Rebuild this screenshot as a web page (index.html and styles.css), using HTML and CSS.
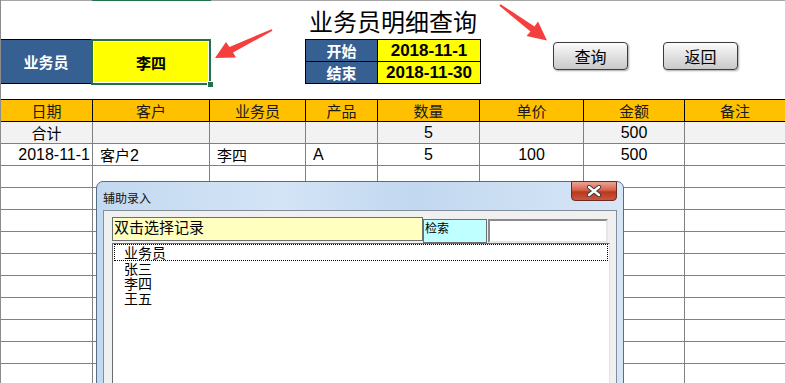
FILE: index.html
```html
<!DOCTYPE html>
<html lang="zh-CN">
<head>
<meta charset="utf-8">
<title>业务员明细查询</title>
<link rel="stylesheet" href="styles.css">
</head>
<body>
<div class="sheet">
  <div class="strip"><span class="s-gray s-first"></span><span class="s-sel"></span><span class="s-gray s-rest"></span></div>
  <div class="top">
    <div class="who">
      <div class="who-label">业务员</div>
      <div class="who-value">李四<span class="handle"></span></div>
    </div>
    <div class="center">
      <h1 class="title">业务员明细查询</h1>
      <div class="dates">
        <div class="d-label">开始</div>
        <div class="d-val">2018-11-1</div>
        <div class="d-label d-second">结束</div>
        <div class="d-val d-second">2018-11-30</div>
      </div>
    </div>
    <div class="btns">
      <div class="btn">查询</div>
      <div class="btn">返回</div>
    </div>
  </div>

  <div class="grid">
    <div class="c h">日期</div><div class="c h">客户</div><div class="c h">业务员</div><div class="c h">产品</div><div class="c h">数量</div><div class="c h">单价</div><div class="c h">金额</div><div class="c h">备注</div>

    <div class="c sum ctr">合计</div><div class="c sum"></div><div class="c sum"></div><div class="c sum"></div><div class="c sum ctr num">5</div><div class="c sum"></div><div class="c sum ctr num">500</div><div class="c sum"></div>

    <div class="c r num">2018-11-1</div><div class="c l">客户<span class="num">2</span></div><div class="c l">李四</div><div class="c l num">A</div><div class="c ctr num">5</div><div class="c ctr num">100</div><div class="c ctr num">500</div><div class="c"></div>

    <div class="c"></div><div class="c"></div><div class="c"></div><div class="c"></div><div class="c"></div><div class="c"></div><div class="c"></div><div class="c"></div>
    <div class="c"></div><div class="c"></div><div class="c"></div><div class="c"></div><div class="c"></div><div class="c"></div><div class="c"></div><div class="c"></div>
    <div class="c"></div><div class="c"></div><div class="c"></div><div class="c"></div><div class="c"></div><div class="c"></div><div class="c"></div><div class="c"></div>
    <div class="c"></div><div class="c"></div><div class="c"></div><div class="c"></div><div class="c"></div><div class="c"></div><div class="c"></div><div class="c"></div>
    <div class="c"></div><div class="c"></div><div class="c"></div><div class="c"></div><div class="c"></div><div class="c"></div><div class="c"></div><div class="c"></div>
    <div class="c"></div><div class="c"></div><div class="c"></div><div class="c"></div><div class="c"></div><div class="c"></div><div class="c"></div><div class="c"></div>
    <div class="c"></div><div class="c"></div><div class="c"></div><div class="c"></div><div class="c"></div><div class="c"></div><div class="c"></div><div class="c"></div>
    <div class="c"></div><div class="c"></div><div class="c"></div><div class="c"></div><div class="c"></div><div class="c"></div><div class="c"></div><div class="c"></div>
    <div class="c"></div><div class="c"></div><div class="c"></div><div class="c"></div><div class="c"></div><div class="c"></div><div class="c"></div><div class="c"></div>
    <div class="c"></div><div class="c"></div><div class="c"></div><div class="c"></div><div class="c"></div><div class="c"></div><div class="c"></div><div class="c"></div>
  </div>

  <svg class="arrows" width="785" height="100" viewBox="0 0 785 100">
    <polygon points="215,58 236,57.5 233,52.5 272.5,30.8 271.5,29.2 229.5,47 226,42" fill="#f53e3e"/>
    <polygon points="547,40.5 526.5,36 530.5,31.5 499.4,5.8 500.6,4.2 534.5,26.5 538,21.5" fill="#f53e3e"/>
  </svg>

  <div class="dialog">
    <div class="dlg-title">辅助录入</div>
    <div class="close">
      <svg width="16" height="12" viewBox="0 0 16 12">
        <path d="M3 2 L13 10 M13 2 L3 10" stroke="#3a3a3a" stroke-width="4.2" stroke-linecap="round"/>
        <path d="M3 2 L13 10 M13 2 L3 10" stroke="#ffffff" stroke-width="2.4" stroke-linecap="round"/>
      </svg>
    </div>
    <div class="dlg-body">
      <div class="search-row">
        <div class="hint">双击选择记录</div>
        <div class="kw">检索</div>
        <div class="input"></div>
      </div>
      <div class="list">
        <div class="item focus">业务员</div>
        <div class="item">张三</div>
        <div class="item">李四</div>
        <div class="item">王五</div>
      </div>
    </div>
  </div>
</div>
</body>
</html>
```

FILE: styles.css
```css
* {
  box-sizing: border-box;
}

html, body {
  margin: 0;
  padding: 0;
  background: #ffffff;
  overflow: hidden;
}

body {
  font-family: "Noto Sans CJK SC", "Noto Sans", sans-serif;
  color: #000;
}

.sheet {
  position: relative;
  width: 785px;
  height: 383px;
  overflow: hidden;
  border-left: 1px solid #8c8c8c;
}

/* top strip */
.strip {
  display: flex;
  height: 1px;
}
.s-gray {
  background: #a6a6a6;
}
.s-first {
  width: 91px;
}
.s-sel {
  width: 119px;
  background: #217346;
}
.s-rest {
  flex: 1;
}

/* top area */
.top {
  height: 98px;
  display: flex;
  align-items: flex-start;
}

.who {
  margin-top: 38px;
  display: flex;
}
.who-label {
  width: 90px;
  height: 45px;
  background: #366092;
  border-top: 1px solid #000;
  border-bottom: 1px solid #000;
  color: #fff;
  font-weight: bold;
  font-size: 15px;
  display: flex;
  align-items: center;
  justify-content: center;
}
.who-value {
  position: relative;
  width: 120px;
  height: 46px;
  background: #ffff00;
  border: 2px solid #217346;
  box-shadow: inset 0 0 0 1px #ffffff;
  font-weight: bold;
  font-size: 15px;
  display: flex;
  align-items: center;
  justify-content: center;
}
.handle {
  position: absolute;
  right: -5px;
  bottom: -5px;
  width: 7px;
  height: 7px;
  background: #217346;
  border: 1px solid #ffffff;
}

.center {
  margin-left: 94px;
  width: 176px;
  display: flex;
  flex-direction: column;
  align-items: center;
}
.title {
  margin: 8px 0 0;
  font-size: 24px;
  line-height: 24px;
  font-weight: normal;
  white-space: nowrap;
}
.dates {
  margin-top: 6px;
  width: 176px;
  display: grid;
  grid-template-columns: 71px 103px;
  border: 1px solid #000;
}
.d-label {
  height: 21px;
  background: #366092;
  color: #fff;
  font-weight: bold;
  font-size: 15px;
  display: flex;
  align-items: center;
  justify-content: center;
}
.d-val {
  height: 21px;
  background: #ffff00;
  border-left: 1px solid #000;
  font-family: "Liberation Sans", Arial, sans-serif;
  font-weight: bold;
  font-size: 17px;
  display: flex;
  align-items: center;
  justify-content: center;
}
.d-second {
  height: 22px;
  border-top: 1px solid #000;
}

.btns {
  margin-left: 72px;
  margin-top: 41px;
  display: flex;
  gap: 35px;
}
.btn {
  width: 75px;
  height: 28px;
  border: 1px solid #3c3c3c;
  border-radius: 4px;
  background: linear-gradient(#fbfbfb, #e4e4e4 45%, #c9c9c9);
  box-shadow: 1px 1px 2px rgba(0, 0, 0, 0.35);
  font-size: 16px;
  display: flex;
  align-items: center;
  justify-content: center;
}

/* grid */
.grid {
  display: grid;
  grid-template-columns: 92px 117px 96px 72px 102px 104px 101px 101px;
  border-top: 1px solid #000;
}
.c {
  height: 22px;
  border-right: 1px solid #808080;
  border-bottom: 1px solid #808080;
  font-size: 15px;
  line-height: 21px;
  white-space: nowrap;
  overflow: hidden;
}
.h {
  background: #ffc000;
  border-right-color: #000;
  border-bottom-color: #000;
  text-align: center;
  color: #1a1a1a;
}
.sum {
  background: #f2f2f2;
}
.num {
  font-family: "Liberation Sans", Arial, sans-serif;
  font-size: 16px;
}
.r {
  text-align: right;
  padding-right: 2px;
}
.l {
  padding-left: 7px;
}
.ctr {
  text-align: center;
}

/* arrows overlay */
.arrows {
  position: absolute;
  left: -1px;
  top: 0;
  pointer-events: none;
}

/* dialog */
.dialog {
  position: absolute;
  left: 95px;
  top: 181px;
  width: 528px;
  height: 230px;
  border: 1px solid #566c87;
  border-radius: 7px 7px 0 0;
  background: linear-gradient(90deg, #c3d9f0 0%, #d3e4f6 35%, #c2d8f0 60%, #d6e6f6 100%);
}
.dlg-title {
  height: 28px;
  padding: 9px 0 0 6px;
  font-size: 12px;
  line-height: 13px;
  color: #111;
}
.close {
  position: absolute;
  left: 474px;
  top: -1px;
  width: 46px;
  height: 20px;
  border: 1px solid #6e2a22;
  border-radius: 0 0 4px 4px;
  background: linear-gradient(#eaa597, #d6624b 45%, #b8391f 55%, #c9563e);
  display: flex;
  align-items: center;
  justify-content: center;
}
.dlg-body {
  margin-left: 6px;
  width: 514px;
  height: 200px;
  background: #f0f0f0;
  border: 1px solid #838e9b;
  padding: 6px 0 0 8px;
}
.search-row {
  display: flex;
  align-items: flex-start;
}
.hint {
  width: 311px;
  height: 24px;
  background: #ffffc0;
  border: 1px solid #6e6e6e;
  font-size: 15px;
  line-height: 18px;
  padding-left: 1px;
  white-space: nowrap;
}
.kw {
  width: 64px;
  height: 24px;
  margin-top: 2px;
  background: #c0ffff;
  border: 1px solid #6e6e6e;
  font-size: 12px;
  line-height: 14px;
  padding: 1px 0 0 1px;
}
.input {
  width: 120px;
  height: 24px;
  margin-top: 2px;
  margin-left: 1px;
  background: #ffffff;
  border: 2px solid;
  border-color: #8a8a8a #e6e6e6 #e6e6e6 #8a8a8a;
}
.list {
  width: 498px;
  height: 170px;
  background: #ffffff;
  border: 1px solid;
  border-color: #6b6b6b #e3e3e3 #e3e3e3 #6b6b6b;
  font-size: 14px;
  line-height: 15px;
}
.item {
  height: 15px;
  padding-left: 11px;
  white-space: nowrap;
}
.item.focus {
  height: 17px;
  margin: 0 1px;
  border: 1px dotted #000;
  padding-left: 9px;
}
```
